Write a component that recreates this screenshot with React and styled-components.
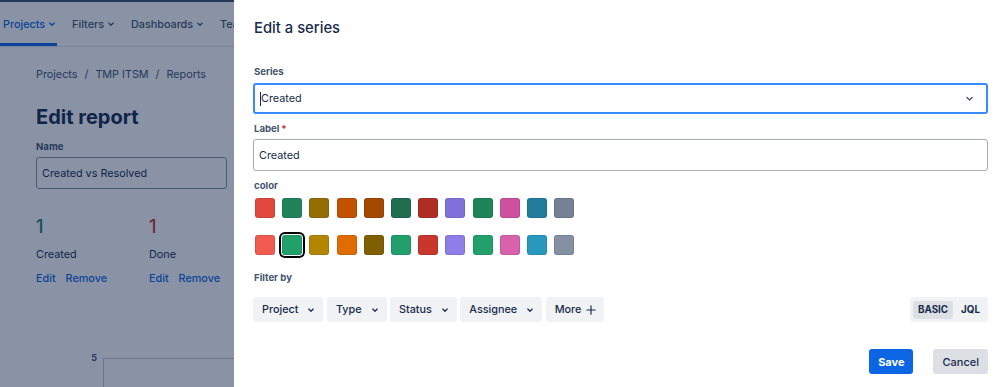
import React from "react";
import styled, { createGlobalStyle } from "styled-components";

const GlobalStyle = createGlobalStyle`
  html, body {
    margin: 0;
    padding: 0;
  }
  body {
    font-family: Inter, "Noto Sans", "Liberation Sans", sans-serif;
    color: #172b4d;
    -webkit-font-smoothing: antialiased;
  }
`;

const Screen = styled.div`
  position: relative;
  width: 999px;
  height: 387px;
  overflow: hidden;
  background: #fff;
`;

/* ---------- page behind the blanket ---------- */

const Page = styled.div`
  width: 234px;
  overflow: hidden;
`;

const TopStrip = styled.div`
  height: 2px;
  background: #44546f;
`;

const Nav = styled.nav`
  display: flex;
  align-items: stretch;
  height: 44px;
  border-bottom: 1px solid #dcdfe4;
  gap: 12px;
  white-space: nowrap;
`;

const NavItem = styled.div`
  display: flex;
  align-items: center;
  gap: 3px;
  padding: 3px 1px 0 3px;
  font-size: 10.8px;
  font-weight: 500;
  color: ${p => (p.active ? "#0c66e4" : "#44546f")};
  border-bottom: 3px solid ${p => (p.active ? "#0c66e4" : "transparent")};
`;

const Body = styled.div`
  display: flex;
  height: 340px;
`;

const SideLine = styled.div`
  width: 1px;
  margin-left: 5px;
  background: #c1c7d0;
`;

const Content = styled.main`
  flex: 1;
  padding: 20px 0 0 31px;
`;

const Breadcrumbs = styled.div`
  display: flex;
  gap: 7px;
  font-size: 10.8px;
  line-height: 16px;
  color: #44546f;
`;

const Heading = styled.h1`
  margin: 22px 0 0;
  font-size: 20px;
  line-height: 24px;
  font-weight: 700;
  color: #172b4d;
`;

const PageLabel = styled.div`
  margin-top: 11px;
  font-size: 9.6px;
  line-height: 14px;
  font-weight: 700;
  color: #44546f;
`;

const PageInput = styled.div`
  display: flex;
  align-items: center;
  box-sizing: border-box;
  width: 191px;
  height: 32px;
  margin-top: 3px;
  padding-left: 5px;
  border: 1px solid #8590a2;
  border-radius: 3px;
  font-size: 10.8px;
  color: #172b4d;
`;

const Stats = styled.div`
  display: flex;
  margin-top: 27px;
`;

const Stat = styled.div`
  width: 113px;
`;

const StatValue = styled.div`
  font-size: 18px;
  line-height: 22px;
  font-weight: 500;
  color: ${p => p.color};
`;

const StatName = styled.div`
  margin-top: 9px;
  font-size: 10.8px;
  line-height: 16px;
  color: #172b4d;
`;

const StatLinks = styled.div`
  display: flex;
  gap: 10px;
  margin-top: 8px;
  font-size: 10.8px;
  line-height: 16px;
  font-weight: 500;
  color: #0c66e4;
`;

const Chart = styled.div`
  display: flex;
  margin-top: 71px;
`;

const AxisLabel = styled.div`
  width: 61px;
  text-align: right;
  font-size: 9px;
  font-weight: 700;
  line-height: 12px;
  margin-top: -6px;
  color: #44546f;
`;

const Plot = styled.div`
  flex: 1;
  height: 40px;
  margin-left: 6px;
  border-left: 1px solid #c1c7d0;
  border-top: 1px solid #c1c7d0;
`;

const Blanket = styled.div`
  position: absolute;
  inset: 0;
  background: rgba(9, 30, 66, 0.48);
`;

/* ---------- drawer ---------- */

const Drawer = styled.section`
  position: absolute;
  top: 0;
  bottom: 0;
  left: 234px;
  right: 0;
  box-sizing: border-box;
  padding: 18px 11px 0 19px;
  background: #fff;
  display: flex;
  flex-direction: column;
`;

const Title = styled.h2`
  margin: 0 0 0 1px;
  font-size: 14.8px;
  line-height: 20px;
  font-weight: 500;
  color: #172b4d;
`;

const FieldLabel = styled.label`
  display: block;
  margin: ${p => p.top}px 0 0 1px;
  font-size: 9.6px;
  line-height: 14px;
  font-weight: 700;
  color: #44546f;
`;

const Required = styled.span`
  color: #c9372c;
  margin-left: 2px;
`;

const Select = styled.div`
  display: flex;
  align-items: center;
  box-sizing: border-box;
  height: 31px;
  margin-top: 4px;
  padding: 0 12px 0 5px;
  border: 2px solid #388bff;
  border-radius: 3px;
  font-size: 10.8px;
  color: #172b4d;
`;

const Caret = styled.span`
  width: 1px;
  height: 14px;
  background: #172b4d;
`;

const SelectValue = styled.span`
  flex: 1;
`;

const TextInput = styled.div`
  display: flex;
  align-items: center;
  box-sizing: border-box;
  height: 32px;
  margin-top: 3px;
  padding-left: 5px;
  border: 1px solid #a5adba;
  border-radius: 3px;
  font-size: 10.8px;
  color: #172b4d;
`;

const SwatchGrid = styled.div`
  display: flex;
  flex-direction: column;
  gap: 17px;
  margin: 5px 0 0 2px;
`;

const SwatchRow = styled.div`
  display: flex;
  gap: 7.2px;
`;

const Swatch = styled.div`
  box-sizing: border-box;
  width: 20px;
  height: 20px;
  border-radius: 3px;
  background: ${p => p.color};
  border: 1px solid rgba(9, 30, 66, 0.12);
  box-shadow: ${p => (p.selected ? "0 0 0 1px #fff, 0 0 0 3px #000" : "none")};
`;

const FilterRow = styled.div`
  display: flex;
  align-items: center;
  margin-top: 12px;
`;

const FilterButtons = styled.div`
  display: flex;
  gap: 3.5px;
`;

const FilterButton = styled.div`
  display: flex;
  align-items: center;
  gap: ${p => (p.plus ? 5 : 9)}px;
  height: 25px;
  padding: 0 8px 0 9px;
  border-radius: 3px;
  background: #f1f2f4;
  font-size: 10.8px;
  font-weight: 500;
  color: #172b4d;
`;

const ModeToggle = styled.div`
  display: flex;
  align-items: center;
  gap: 8px;
  margin-left: auto;
  height: 25px;
  padding: 0 8px 0 3px;
  border-radius: 3px;
  background: #f1f2f4;
`;

const ModeOption = styled.div`
  display: flex;
  align-items: center;
  height: 18px;
  padding: 0 ${p => (p.active ? 5 : 0)}px;
  border-radius: 3px;
  background: ${p => (p.active ? "#dcdfe4" : "transparent")};
  font-size: 9.8px;
  font-weight: 700;
  color: #172b4d;
`;

const Footer = styled.div`
  display: flex;
  justify-content: flex-end;
  gap: 20px;
  margin-top: 27px;
`;

const Button = styled.button`
  height: 25px;
  padding: 0 9px;
  border: 0;
  border-radius: 3px;
  font-family: inherit;
  font-size: 11px;
  font-weight: ${p => (p.primary ? 700 : 500)};
  background: ${p => (p.primary ? "#0c66e4" : "#dcdfe4")};
  color: ${p => (p.primary ? "#fff" : "#172b4d")};
`;

const Chevron = ({ size = 8, color = "currentColor" }) => (
  <svg width={size} height={size} viewBox="0 0 10 10" fill="none">
    <path d="M2.2 3.8 5 6.6l2.8-2.8" stroke={color} strokeWidth="1.5" strokeLinecap="round" strokeLinejoin="round" />
  </svg>
);

const Plus = () => (
  <svg width="10" height="10" viewBox="0 0 12 12" fill="none">
    <path d="M6 1v10M1 6h10" stroke="#172b4d" strokeWidth="1.4" strokeLinecap="round" />
  </svg>
);

const darkColors = ["#e2483d", "#1f845a", "#946f00", "#c25100", "#a54800", "#216e4e", "#ae2e24", "#8270db", "#1f845a", "#cd519d", "#227d9b", "#758195"];
const lightColors = ["#f15b50", "#22a06b", "#b38600", "#e06c00", "#7f5f01", "#22a06b", "#c9372c", "#8f7ee7", "#22a06b", "#da62ac", "#2898bd", "#8590a2"];

const filters = ["Project", "Type", "Status", "Assignee"];

export default function App() {
  return (
    <Screen>
      <GlobalStyle />
      <Page>
        <TopStrip />
        <Nav>
          <NavItem active>Projects <Chevron /></NavItem>
          <NavItem>Filters <Chevron /></NavItem>
          <NavItem>Dashboards <Chevron /></NavItem>
          <NavItem>Teams <Chevron /></NavItem>
        </Nav>
        <Body>
          <SideLine />
          <Content>
            <Breadcrumbs>
              <span>Projects</span><span>/</span><span>TMP ITSM</span><span>/</span><span>Reports</span>
            </Breadcrumbs>
            <Heading>Edit report</Heading>
            <PageLabel>Name</PageLabel>
            <PageInput>Created vs Resolved</PageInput>
            <Stats>
              <Stat>
                <StatValue color="#1f845a">1</StatValue>
                <StatName>Created</StatName>
                <StatLinks><span>Edit</span><span>Remove</span></StatLinks>
              </Stat>
              <Stat>
                <StatValue color="#c9372c">1</StatValue>
                <StatName>Done</StatName>
                <StatLinks><span>Edit</span><span>Remove</span></StatLinks>
              </Stat>
            </Stats>
            <Chart>
              <AxisLabel>5</AxisLabel>
              <Plot />
            </Chart>
          </Content>
        </Body>
      </Page>
      <Blanket />

      <Drawer>
        <Title>Edit a series</Title>

        <FieldLabel top={27}>Series</FieldLabel>
        <Select>
          <Caret />
          <SelectValue>Created</SelectValue>
          <Chevron size={9} color="#44546f" />
        </Select>

        <FieldLabel top={8}>Label<Required>*</Required></FieldLabel>
        <TextInput>Created</TextInput>

        <FieldLabel top={8}>color</FieldLabel>
        <SwatchGrid>
          <SwatchRow>
            {darkColors.map((c, i) => <Swatch key={i} color={c} />)}
          </SwatchRow>
          <SwatchRow>
            {lightColors.map((c, i) => <Swatch key={i} color={c} selected={i === 1} />)}
          </SwatchRow>
        </SwatchGrid>

        <FieldLabel top={16}>Filter by</FieldLabel>
        <FilterRow>
          <FilterButtons>
            {filters.map(f => (
              <FilterButton key={f}>{f} <Chevron /></FilterButton>
            ))}
            <FilterButton plus>More <Plus /></FilterButton>
          </FilterButtons>
          <ModeToggle>
            <ModeOption active>BASIC</ModeOption>
            <ModeOption>JQL</ModeOption>
          </ModeToggle>
        </FilterRow>

        <Footer>
          <Button primary>Save</Button>
          <Button>Cancel</Button>
        </Footer>
      </Drawer>
    </Screen>
  );
}
